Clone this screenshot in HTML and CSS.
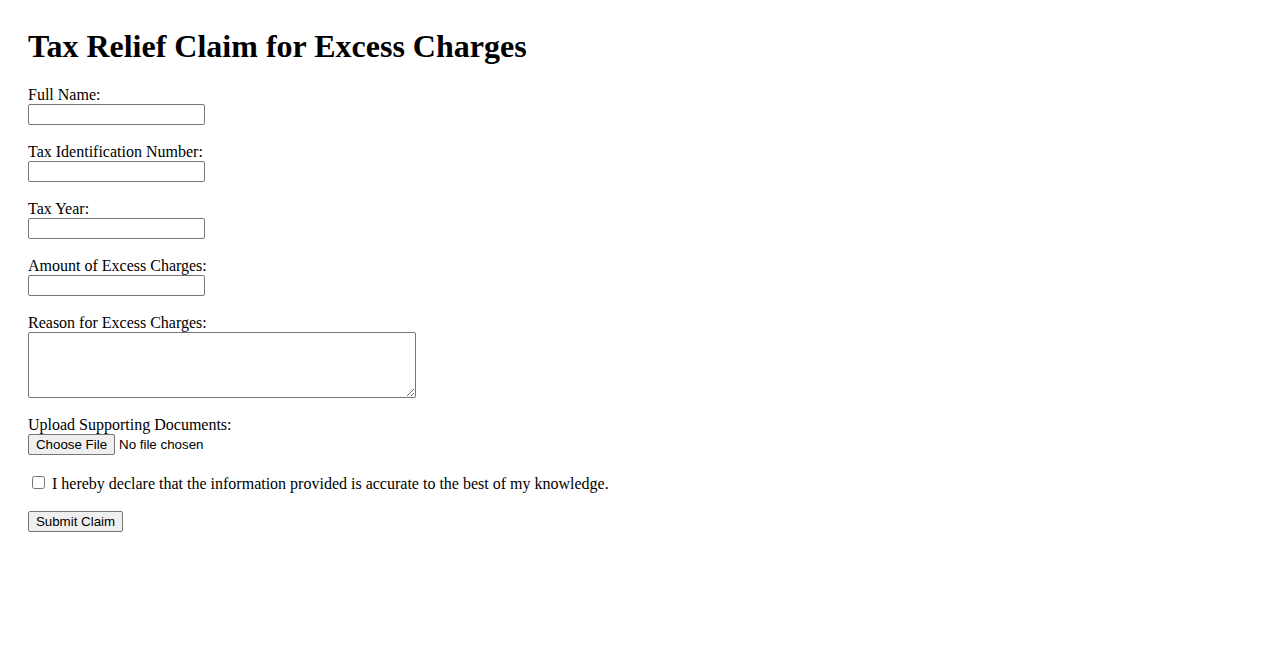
FILE: index.html
```html
<!DOCTYPE html>
<html lang="en">
<head>
    <meta charset="UTF-8">
    <title>Tax Relief Claim for Excess Charges</title>
    <link rel="stylesheet" href="styles.css">
</head>
<body>
    <h1>Tax Relief Claim for Excess Charges</h1>
    <form class="claim-form">
        <div class="field">
            <label for="name">Full Name:</label>
            <input type="text" id="name" class="text-input">
        </div>
        <div class="field">
            <label for="tin">Tax Identification Number:</label>
            <input type="text" id="tin" class="text-input">
        </div>
        <div class="field">
            <label for="year">Tax Year:</label>
            <input type="text" id="year" class="text-input">
        </div>
        <div class="field">
            <label for="amount">Amount of Excess Charges:</label>
            <input type="text" id="amount" class="text-input">
        </div>
        <div class="field">
            <label for="reason">Reason for Excess Charges:</label>
            <textarea id="reason" class="reason-input"></textarea>
        </div>
        <div class="field">
            <label for="docs">Upload Supporting Documents:</label>
            <div class="file-row">
                <span class="file-btn">Choose File</span>
                <span class="file-name">No file chosen</span>
            </div>
        </div>
        <div class="declare">
            <input type="checkbox" id="declare" class="check">
            <label for="declare">I hereby declare that the information provided is accurate to the best of my knowledge.</label>
        </div>
        <button type="button" class="submit-btn">Submit Claim</button>
    </form>
</body>
</html>
```

FILE: styles.css
```css
body {
    margin: 0;
    padding: 28px;
    font-family: 'Liberation Serif', 'Times New Roman', serif;
    font-size: 16px;
    color: #000;
    background: #fff;
}
h1 {
    margin: 0 0 21px 0;
    font-size: 32px;
    font-weight: bold;
    line-height: 37px;
}
.claim-form {
    display: flex;
    flex-direction: column;
    align-items: flex-start;
}
.field {
    display: flex;
    flex-direction: column;
    align-items: flex-start;
    margin-bottom: 18px;
}
.field label {
    line-height: 18px;
}
.text-input {
    box-sizing: border-box;
    width: 177px;
    height: 21px;
    margin: 0;
    border: 1px solid #767676;
    border-radius: 2px;
    padding: 1px 2px;
}
.reason-input {
    box-sizing: border-box;
    width: 388px;
    height: 66px;
    margin: 0;
    border: 1px solid #767676;
    border-radius: 2px;
    resize: vertical;
}
.file-row {
    display: flex;
    align-items: center;
    font-family: 'Liberation Sans', Arial, sans-serif;
    font-size: 13.33px;
}
.file-btn,
.submit-btn {
    box-sizing: border-box;
    height: 21px;
    padding: 1px 6px;
    background: #efefef;
    border: 1px solid #767676;
    border-radius: 2px;
    font-family: 'Liberation Sans', Arial, sans-serif;
    font-size: 13.33px;
    line-height: 17px;
    color: #000;
}
.file-btn {
    width: 87px;
    text-align: center;
    margin-right: 4px;
}
.declare {
    display: flex;
    align-items: flex-start;
    margin-top: 1px;
    margin-bottom: 18px;
}
.declare label {
    line-height: 18px;
    margin-top: 1px;
}
.check {
    width: 13px;
    height: 13px;
    margin: 2px 7px 0 4px;
}
.submit-btn {
    width: 95px;
    margin: 0;
}
```
